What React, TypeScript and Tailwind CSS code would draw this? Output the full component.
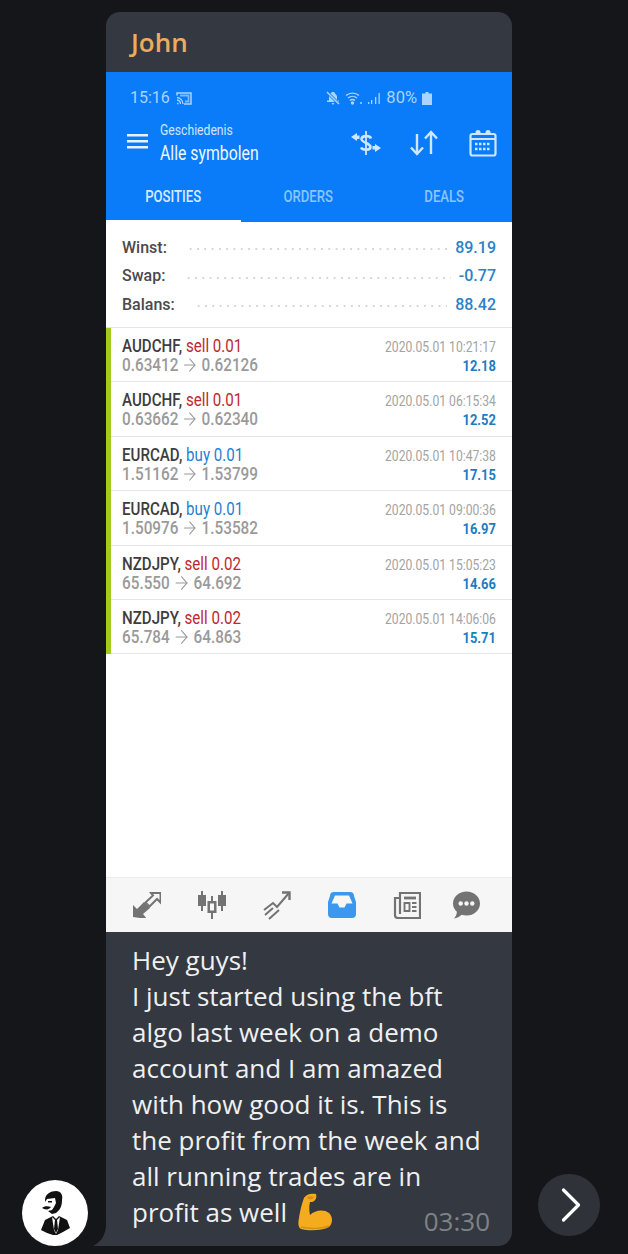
import { ArrowRight, ChevronRight } from "lucide-react";

const trades = [
  { sym: "AUDCHF", side: "sell 0.01", sell: true, from: "0.63412", to: "0.62126", time: "2020.05.01 10:21:17", profit: "12.18" },
  { sym: "AUDCHF", side: "sell 0.01", sell: true, from: "0.63662", to: "0.62340", time: "2020.05.01 06:15:34", profit: "12.52" },
  { sym: "EURCAD", side: "buy 0.01", sell: false, from: "1.51162", to: "1.53799", time: "2020.05.01 10:47:38", profit: "17.15" },
  { sym: "EURCAD", side: "buy 0.01", sell: false, from: "1.50976", to: "1.53582", time: "2020.05.01 09:00:36", profit: "16.97" },
  { sym: "NZDJPY", side: "sell 0.02", sell: true, from: "65.550", to: "64.692", time: "2020.05.01 15:05:23", profit: "14.66" },
  { sym: "NZDJPY", side: "sell 0.02", sell: true, from: "65.784", to: "64.863", time: "2020.05.01 14:06:06", profit: "15.71" },
];

const summary = [
  { label: "Winst:", value: "89.19" },
  { label: "Swap:", value: "-0.77" },
  { label: "Balans:", value: "88.42" },
];

function StatusBar() {
  return (
    <div className="flex h-[26px] items-center justify-between pl-[24px] pr-[80px] text-[16px] text-[#a9d4ff] font-['Roboto',sans-serif]">
      <div className="flex items-center gap-[6px]">
        <span>15:16</span>
        <svg width="16" height="13" viewBox="0 0 16 13" fill="none" stroke="currentColor">
          <path d="M1 3.500V1h14v11H8" strokeWidth="1.500" />
          <path d="M1 5.500a6.500 6.500 0 0 1 6 6.500M1 8a4 4 0 0 1 3.500 4" strokeWidth="1.300" />
          <path d="M1 11.500h1.500" strokeWidth="1.500" />
          <path d="M4 3.500h8.500v6H9" strokeWidth="1.800" opacity="0.7" />
        </svg>
      </div>
      <div className="flex items-center">
        <svg width="14" height="14" viewBox="0 0 14 14" fill="currentColor">
          <path d="M3 4l3-3h2l3 4v5H3z" />
          <path d="M1 9.500h12v1.500H1zM5.500 12h3l-1.500 2z" />
          <path d="M1 1l12 12" stroke="#0a7cf9" strokeWidth="3" />
          <path d="M1 1l12 12" stroke="currentColor" strokeWidth="1.500" />
        </svg>
        <svg width="18" height="14" viewBox="0 0 18 14" fill="none" stroke="currentColor" strokeWidth="1.400" className="ml-[5px]">
          <path d="M1 4.500a10 10 0 0 1 13 0M3 7a7 7 0 0 1 9 0M5 9.500a3.500 3.500 0 0 1 5 0" />
          <circle cx="7.500" cy="12" r="1" fill="currentColor" />
          <path d="M15 12h2" />
        </svg>
        <svg width="14" height="13" viewBox="0 0 14 13" fill="currentColor" className="ml-[4px]">
          <path d="M1 10h1.300v2H1zM4 8h1.300v4H4zM8 5h1.300v7H8zM11.500 1h1.300v11h-1.300z" />
        </svg>
        <span className="ml-[5px] text-[16.500px]">80%</span>
        <svg width="10" height="13" viewBox="0 0 10 13" fill="currentColor" className="ml-[5px]">
          <path d="M3.500 0h3v1.500H10V13H0V1.500h3.500z" />
        </svg>
      </div>
    </div>
  );
}

function Toolbar() {
  return (
    <div className="flex h-[60px] items-center pl-[21px] pr-[15px] text-white">
      <svg width="21" height="15" viewBox="0 0 21 15" fill="currentColor" className="opacity-90">
        <path d="M0 0h21v2.600H0zM0 6h21v2.600H0zM0 12h21v2.600H0z" />
      </svg>
      <div className="ml-[12px] flex flex-col pt-[3px] font-['Roboto',sans-serif]">
        <span className="w-[80px] origin-left scale-x-[.87] whitespace-nowrap text-[14px] leading-[18px] text-[#cfe6ff]">Geschiedenis</span>
        <span className="mt-[2px] w-[100px] origin-left scale-x-[.79] whitespace-nowrap text-[20px] leading-[24px] text-[#eef7ff]">Alle symbolen</span>
      </div>
      <div className="ml-auto flex items-center pt-[4px] text-[#cfe6ff]">
        <svg width="30" height="26" viewBox="0 0 30 26" fill="none" stroke="currentColor">
          <path d="M15 1v24" strokeWidth="1.800" />
          <path d="M20 8.500C19 5.500 11 5 10.500 9c-.4 3.500 9 4 9 8 0 3.500-8 3.500-9.500.5" strokeWidth="2.600" />
          <path d="M0 7l6-4v2.500h2.500V9H6v2z" fill="currentColor" stroke="none" />
          <path d="M30 18l-6-4v2h-2.500v3.500H24V22z" fill="currentColor" stroke="none" />
        </svg>
        <svg width="30" height="26" viewBox="0 0 30 26" fill="none" stroke="currentColor" strokeWidth="2.400" className="ml-[28px]">
          <path d="M8 4v20M2 17.500l6 6.500 6-6.500" />
          <path d="M22 24V2M16 8.500L22 2l6 6.500" />
        </svg>
        <svg width="28" height="28" viewBox="0 0 28 28" fill="none" stroke="currentColor" strokeWidth="2.200" className="ml-[30px]">
          <rect x="1.500" y="5" width="25" height="21.500" rx="2" />
          <path d="M1.500 10h25" />
          <circle cx="9" cy="3.500" r="2.500" fill="currentColor" stroke="none" />
          <circle cx="19" cy="3.500" r="2.500" fill="currentColor" stroke="none" />
          <path d="M6 15h16M6 20h16" strokeDasharray="2.500 1.500" strokeWidth="2.400" />
        </svg>
      </div>
    </div>
  );
}

function Tabs() {
  return (
    <div className="relative flex h-[51px] items-center text-[16px] font-medium font-['Roboto',sans-serif]">
      <div className="flex h-full w-[135px] items-center justify-center text-[#d6eaff]">
        <span className="scale-x-[.82]">POSITIES</span>
      </div>
      <div className="flex h-full w-[135px] items-center justify-center text-[#8cc4ff]">
        <span className="scale-x-[.82]">ORDERS</span>
      </div>
      <div className="flex h-full w-[136px] items-center justify-center text-[#8cc4ff]">
        <span className="scale-x-[.82]">DEALS</span>
      </div>
      <div className="absolute bottom-0 left-0 h-[2px] w-[135px] bg-white" />
    </div>
  );
}

function TradeRow({ t }: { t: (typeof trades)[number] }) {
  return (
    <div className="flex h-[54.400px] justify-between border-b border-[#e4e4e4] pt-[8px] pl-[11px] pr-[16px] font-['Roboto',sans-serif]">
      <div>
        <div className="w-[120px] origin-left scale-x-[.84] whitespace-nowrap text-[18px] leading-[20px]">
          <span className="font-medium text-[#3d3d3d]">{t.sym}, </span>
          <span className={t.sell ? "text-[#c0272d]" : "text-[#1f7fd1]"}>{t.side}</span>
        </div>
        <div className="flex h-[18px] w-[160px] origin-left scale-x-[.85] items-center gap-[3px] whitespace-nowrap text-[18px] font-medium leading-[18px] text-[#9a9a9a]">
          <span>{t.from}</span>
          <ArrowRight size={22} strokeWidth={1.3} />
          <span>{t.to}</span>
        </div>
      </div>
      <div className="text-right">
        <div className="origin-right scale-x-[.81] whitespace-nowrap text-[15px] leading-[22px] text-[#a3a3a3]">{t.time}</div>
        <div className="origin-right scale-x-[.86] text-[15px] font-bold leading-[16px] text-[#1b7cc4]">{t.profit}</div>
      </div>
    </div>
  );
}

function BottomNav() {
  return (
    <div className="flex h-[55px] items-center border-t border-[#ebebeb] bg-[#f6f6f6] pl-[27px] text-[#737373]">
      <svg width="28" height="26" viewBox="0 0 28 26" fill="none">
        <path d="M0 25V13l4 4 7-7 6 6-7 6 4 5z" fill="currentColor" />
        <path d="M18 1h9.500v9.500L24 7l-7.500 7.500-4-4L20 3.500z" stroke="currentColor" strokeWidth="2" />
      </svg>
      <svg width="28" height="28" viewBox="0 0 28 28" fill="currentColor" className="ml-[37px]">
        <path d="M3 0h2v4h3v11H5v5H3v-5H0V4h3zM23 0h2v4h3v11h-3v5h-2v-5h-3V4h3z" />
        <path d="M13 5h2v5h3.500v12H15v6h-2v-6H9.500V10H13zM12 12.500v7h4v-7z" />
      </svg>
      <svg width="28" height="29" viewBox="0 0 28 29" fill="none" stroke="currentColor" className="ml-[37px]">
        <path d="M1 19l9-7 4 4 12-14" strokeWidth="2" />
        <path d="M19 1.500h7.500V9" strokeWidth="2.400" />
        <path d="M2 24l8-7M6 28l10-9" strokeWidth="2" />
      </svg>
      <svg width="28" height="26" viewBox="0 0 28 26" className="ml-[37px]">
        <path d="M6 0h16a4 4 0 0 1 4 4l2 6v12a4 4 0 0 1-4 4H4a4 4 0 0 1-4-4V10l2-6a4 4 0 0 1 4-4z" fill="#3c98ee" />
        <path d="M7 3.500h14l3.500 8h-6l-2 4h-5l-2-4h-6z" fill="#f6f6f6" />
      </svg>
      <svg width="28" height="27" viewBox="0 0 28 27" fill="none" stroke="currentColor" strokeWidth="2.200" className="ml-[37px]">
        <path d="M7 5V1h20v25H5a3 3 0 0 1-3-3V6h5v16" />
        <path d="M11 6h12" strokeWidth="2.800" />
        <path d="M11.500 11h5v8h-5zM19 11h4.500M19 15h4.500M19 19h4.500" strokeWidth="1.900" />
      </svg>
      <svg width="27" height="28" viewBox="0 0 28 28" className="ml-[32px]">
        <path d="M14 0c7.700 0 14 5.400 14 12.500S21.700 25 14 25c-1.800 0-3.500-.3-5-.8C7 26 4 28 1 28c2-2 3-4.500 3-7C1.500 18.800 0 16 0 12.500 0 5.400 6.300 0 14 0z" fill="currentColor" />
        <circle cx="8" cy="12.500" r="2.300" fill="#f6f6f6" />
        <circle cx="14" cy="12.500" r="2.300" fill="#f6f6f6" />
        <circle cx="20" cy="12.500" r="2.300" fill="#f6f6f6" />
      </svg>
    </div>
  );
}

function Avatar() {
  return (
    <div className="flex h-[66px] w-[66px] items-center justify-center rounded-full bg-white">
      <svg width="32" height="46" viewBox="0 0 32 46">
        <path d="M6 10C6 4 12 1 17 1s7 4 6 9c0 6-2 10-6 13l-4 1-4-3z" fill="#111" />
        <path d="M8 9l8-1 1 5-2 4-2 3-4 1-2-4-2-3z" fill="#fff" />
        <path d="M9 11h4v1.500H9z" fill="#111" />
        <path d="M3 18c2-2 6-2 9-1-2 3-6 3-9 1z" fill="#111" />
        <path d="M2 40l4-10 8-4 3 3 3-3 8 4 3 8-7 4-6 3h-4l-6-2z" fill="#111" />
        <path d="M13 27l4 4 4-4-2 13-2 4-2-4z" fill="#fff" />
        <path d="M16 30h2l1 9-2 4-2-4z" fill="#111" />
      </svg>
    </div>
  );
}

function FlexedBiceps() {
  return (
    <svg width="36" height="38" viewBox="0 0 36 38" className="inline-block align-[-8px]">
      <path d="M6 5c2-4 8-5 12-4 1 3 0 7-4 8h-2c-1 4-1 8 0 13 5-5 14-6 19-2 4 4 4 10 0 14-7 4-21 4-28 2-3-2-3-6-2-11C2 18 4 10 6 5z" fill="#f4ac1e" />
      <path d="M9 4c2-1 5-1 7 0-1 2-4 3-6 2z" fill="#d98f12" />
      <path d="M3 34c8 2 20 2 28-1" stroke="#d98f12" strokeWidth="1.500" fill="none" />
    </svg>
  );
}

export default function App() {
  return (
    <div className="relative flex h-[1254px] w-[628px] overflow-hidden bg-[#15161a] font-['Open_Sans',sans-serif]">
      <div className="mt-[12px] ml-[106px] flex h-[1234px] w-[406px] flex-col overflow-hidden rounded-[14px] rounded-bl-none bg-[#343840]">
        <div className="flex h-[60px] shrink-0 items-center pl-[25px] text-[26px] font-semibold text-[#edab5e]">John</div>

        <div className="flex h-[860px] shrink-0 flex-col bg-white">
          <div className="bg-[#0a7cf9] pt-[13px]">
            <StatusBar />
            <Toolbar />
            <Tabs />
          </div>

          <div className="flex h-[106px] flex-col justify-center gap-[9px] border-b border-[#e4e4e4] px-[16px] pt-[3px] font-['Roboto',sans-serif] text-[16px] font-medium">
            {summary.map((s) => (
              <div key={s.label} className="flex items-center leading-[19.500px]">
                <span className="text-[#4a4a4a]">{s.label}</span>
                <span className="mr-[8px] ml-[20px] mt-[3px] h-[4px] flex-1 bg-[radial-gradient(circle,#d6d6d6_1px,transparent_1.300px)] bg-[length:7.300px_4px]" />
                <span className="text-[#2a82c9]">{s.value}</span>
              </div>
            ))}
          </div>

          <div className="border-l-[5px] border-[#a2cb1a]">
            {trades.map((t) => (
              <TradeRow key={t.time} t={t} />
            ))}
          </div>

          <div className="flex-1" />
          <BottomNav />
        </div>

        <div className="whitespace-nowrap px-[26px] pt-[10px] text-[26px] leading-[36px] text-[#eff0f1]">
          <div>Hey guys!</div>
          <div>I just started using the bft</div>
          <div>algo last week on a demo</div>
          <div>account and I am amazed</div>
          <div>with how good it is. This is</div>
          <div>the profit from the week and</div>
          <div>all running trades are in</div>
          <div className="flex h-[36px] items-center">
            <span>profit as well</span>
            <span className="ml-[11px] flex"><FlexedBiceps /></span>
            <span className="ml-auto mr-[-4px] translate-y-[9px] text-[#7f8288]">03:30</span>
          </div>
        </div>
      </div>

      {/* bubble tail + avatar + next button sit over the message column */}
      <svg width="14" height="20" viewBox="0 0 14 20" className="absolute left-[93px] top-[1226px]">
        <path d="M13 0v20H0C6 17 12 12 13 0z" fill="#343840" />
      </svg>
      <div className="absolute bottom-[8px] left-[22px]">
        <Avatar />
      </div>
      <div className="absolute bottom-[18px] left-[538px] flex h-[62px] w-[62px] items-center justify-center rounded-full bg-[#2f3238] text-white">
        <ChevronRight size={60} strokeWidth={1.3} className="ml-[3px] shrink-0" />
      </div>
    </div>
  );
}
